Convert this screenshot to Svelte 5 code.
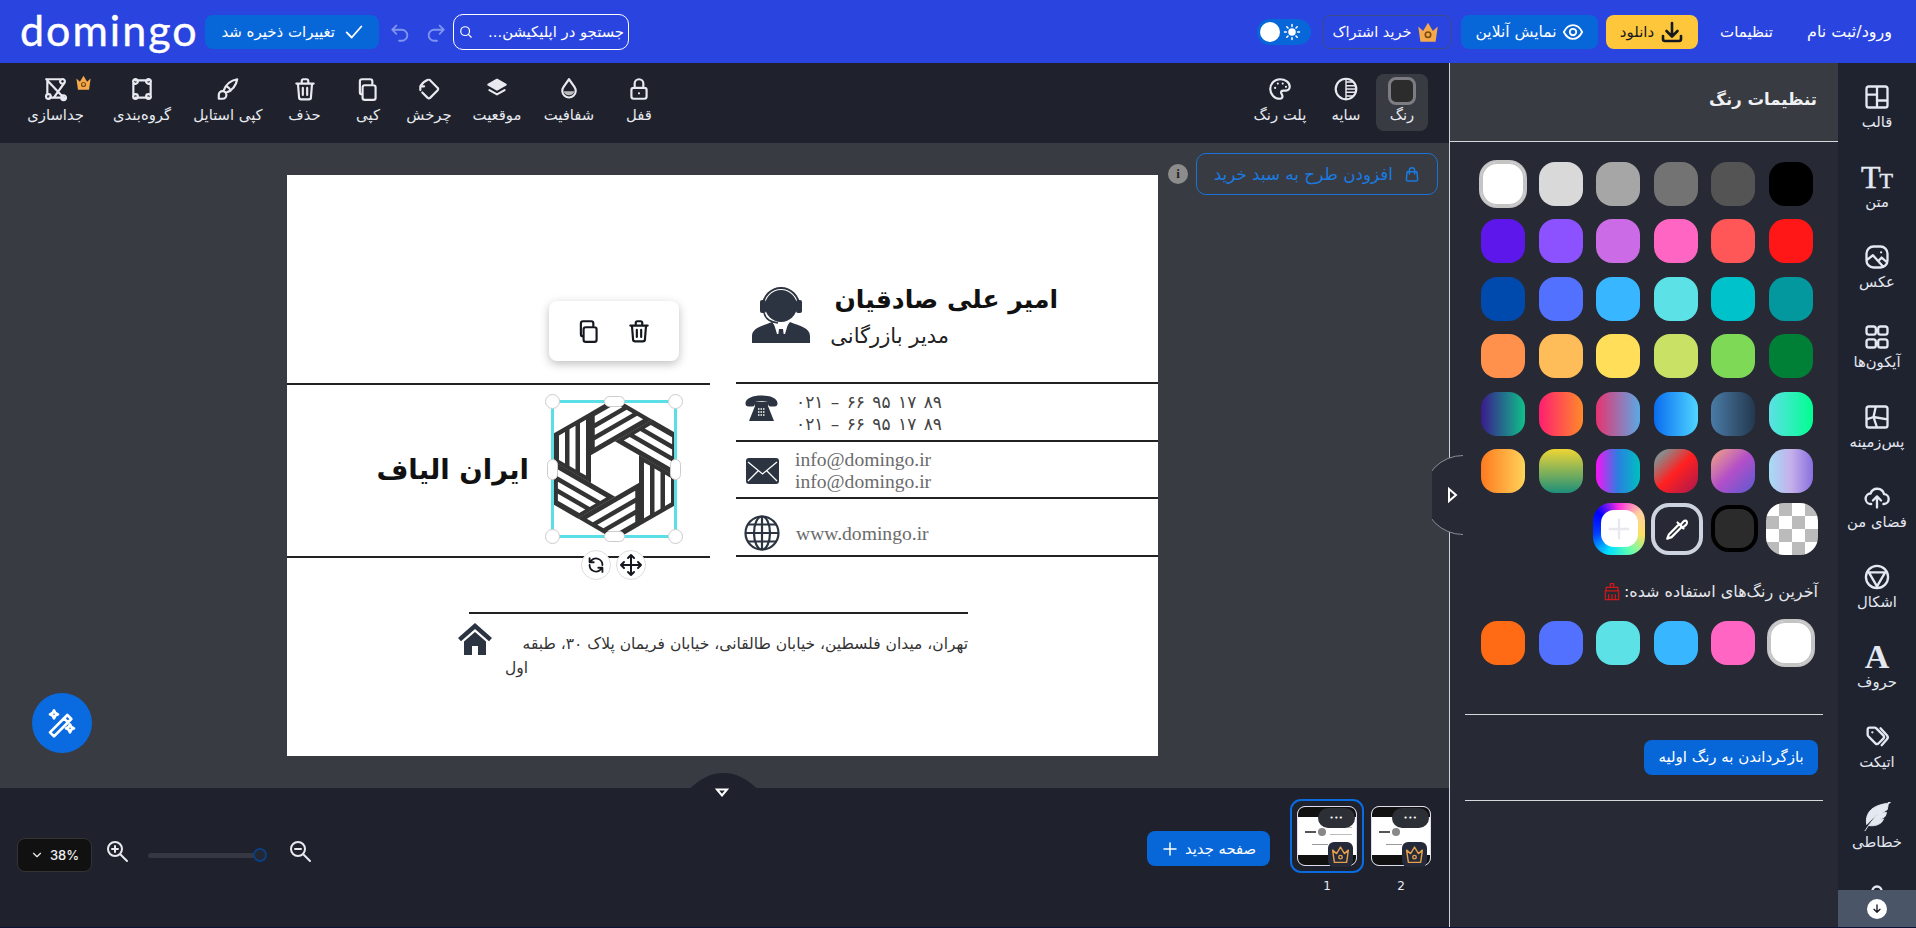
<script>
  const I = {
    lock: "M7 11h10a2 2 0 0 1 2 2v6a2 2 0 0 1-2 2H7a2 2 0 0 1-2-2v-6a2 2 0 0 1 2-2zM8 11V7a4 4 0 0 1 8 0v4M12 16v.01",
    rotate: "M12.5 3.5l7.5 7.5a1.5 1.5 0 0 1 0 2.2l-7 7a1.5 1.5 0 0 1-2.2 0l-5-5M4 13V9.5M4 9.5h3.5M4 9.5C6 6 8.5 4.5 11 3.5",
    copy: "M9 8.5h8a2 2 0 0 1 2 2V20a2 2 0 0 1-2 2H9a2 2 0 0 1-2-2v-9.5a2 2 0 0 1 2-2zM7 17H6.5a2 2 0 0 1-2-2V5a2 2 0 0 1 2-2h7.5a2 2 0 0 1 2 2v3.5",
    trash: "M4 7h16M9 7V4.5A1.5 1.5 0 0 1 10.500 3h3A1.500 1.500 0 0 1 15 4.500V7M5.500 7l1 12.500A2 2 0 0 0 8.500 21.500h7a2 2 0 0 0 2-2L18.500 7M10 11v6.500M14 11v6.500",
    brush: "M3.500 21v-3.500a3.500 3.500 0 1 1 3.500 3.500zM20.500 3c-6 1-10.500 5-12.500 10.500M20.500 3c-1 6-5 10.500-10.500 12.500M10.600 9.500c1.900.9 3.200 2.200 4 4",
    group: "M6 4h12M6 20h12M4 6v12M20 6v12M6 2.800a2.200 2.200 0 1 0 0 4.400a2.200 2.200 0 1 0 0-4.400zM18 2.800a2.200 2.200 0 1 0 0 4.400a2.200 2.200 0 1 0 0-4.400zM6 16.800a2.200 2.200 0 1 0 0 4.400a2.200 2.200 0 1 0 0-4.400zM18 16.800a2.200 2.200 0 1 0 0 4.400a2.200 2.200 0 1 0 0-4.400z",
    ungroup: "M3 3l17 18M3 3h13M6 20h12M4 4v13M20 6l-10 14M18 2.800a2.200 2.200 0 1 0 0 4.400a2.200 2.200 0 1 0 0-4.400zM5 16.800a2.200 2.200 0 1 0 0 4.400a2.200 2.200 0 1 0 0-4.400zM19 17.800a2.200 2.200 0 1 0 0 4.400a2.200 2.200 0 1 0 0-4.400z",
    palette: "M12 3a9 9 0 0 0 0 18c1.500 0 2.300-1 2.300-2.200 0-1.800-1.300-2.300-1.300-3.500 0-1.100.9-1.800 2-1.800h2.500A3.500 3.500 0 0 0 21 10c0-4-4-7-9-7zM7.500 11v.01M10 7v.01M14.500 7v.01M17.500 10v.01",
    layout: "M5 3h14a2 2 0 0 1 2 2v14a2 2 0 0 1-2 2H5a2 2 0 0 1-2-2V5a2 2 0 0 1 2-2zM12 3v18M3 10h9M12 15h9",
    photo: "M9 3h6a6 6 0 0 1 6 6v6a6 6 0 0 1-6 6H9a6 6 0 0 1-6-6V9a6 6 0 0 1 6-6zM3.500 14.500l5-4 8.500 9.500M13.500 15l2.500-2.500 4.500 4M15.500 8v.01",
    icons: "M5 3h4a2 2 0 0 1 2 2v3a2 2 0 0 1-2 2H5a2 2 0 0 1-2-2V5a2 2 0 0 1 2-2zM15 3h4a2 2 0 0 1 2 2v3a2 2 0 0 1-2 2h-4a2 2 0 0 1-2-2V5a2 2 0 0 1 2-2zM5 14h4a2 2 0 0 1 2 2v3a2 2 0 0 1-2 2H5a2 2 0 0 1-2-2v-3a2 2 0 0 1 2-2zM15 14h4a2 2 0 0 1 2 2v3a2 2 0 0 1-2 2h-4a2 2 0 0 1-2-2v-3a2 2 0 0 1 2-2z",
    bg: "M5 3h14a2 2 0 0 1 2 2v14a2 2 0 0 1-2 2H5a2 2 0 0 1-2-2V5a2 2 0 0 1 2-2zM11 3L9 12l3 9M3 14l6-2M9 12l12 2",
    cloud: "M7 18a4.500 4.500 0 0 1-.5-9A6 6 0 0 1 18 9.500a4.200 4.200 0 0 1-.5 8.500M12 21v-9M8.500 15l3.500-3.500 3.500 3.500",
    shapes: "M12 2.500a9.500 9.500 0 1 0 0 19a9.500 9.500 0 1 0 0-19zM5 8h14l-7 12z",
    tags: "M4 5.500A1.500 1.500 0 0 1 5.500 4H10c.5 0 1 .2 1.400.6l6 6a2 2 0 0 1 0 2.800l-4 4a2 2 0 0 1-2.800 0l-6-6A2 2 0 0 1 4 10zM8 8v.01M15 4.500l5.500 6a2.500 2.500 0 0 1 0 3.400L16 19",
    check: "M4 12.500l5.500 5.500L20 6",
    undo: "M8 14L3.500 9.500 8 5M4 9.500h10a6 6 0 0 1 0 12h-3",
    redo: "M16 14l4.500-4.500L16 5M20 9.500H10a6 6 0 0 0 0 12h3",
    search: "M10.500 3a7.500 7.500 0 1 0 0 15a7.500 7.500 0 1 0 0-15zM16 16l5 5",
    eye: "M2 12c2.500-5 6-7.500 10-7.500s7.500 2.500 10 7.500c-2.500 5-6 7.500-10 7.500S4.500 17 2 12zM12 8.500a3.500 3.500 0 1 0 0 7a3.500 3.500 0 1 0 0-7z",
    download: "M12 3v13M6.500 11l5.500 5.500 5.500-5.500M3 16v3a2 2 0 0 0 2 2h14a2 2 0 0 0 2-2v-3",
    bag: "M5.500 9h13l1 10a2 2 0 0 1-2 2.200H6.500a2 2 0 0 1-2-2.200zM8.500 12V7a3.500 3.500 0 0 1 7 0v5",
    dropper: "M3 21l1.500-4L14 7.500l2.500 2.500L7 19.500zM12.500 6l5.500 5.500M15 8.500l3-3.500c1-1 2.500-1 3 0s.500 2-.5 3l-3.500 3z",
    broom: "M10 2h4v4.500h-4zM5 6.500h14v4H5zM4 10.500h16V21H4zM8 15v6M12 15v6M16 15v6",
    plus: "M12 4v16M4 12h16",
    zoomin: "M10 3a7 7 0 1 0 0 14a7 7 0 1 0 0-14zM15.500 15.500L22 22M7 10h6M10 7v6",
    zoomout: "M10 3a7 7 0 1 0 0 14a7 7 0 1 0 0-14zM15.500 15.500L22 22M7 10h6",
    wand: "M3 19L16 6l3 3L6 22zM13.500 8.500l3 3M6 2.500l1 2 2 1-2 1-1 2-1-2-2-1 2-1zM18 13l1 2 2 1-2 1-1 2-1-2-2-1 2-1z",
    chev: "M6 9l6 6 6-6",
    cycle: "M19 12a7 7 0 0 0-12-5l-2 2M5 4.500V9h4.500M5 12a7 7 0 0 0 12 5l2-2M19 19.500V15h-4.500",
    move: "M12 2v20M2 12h20M12 2L9 5M12 2l3 3M12 22l-3-3M12 22l3-3M2 12l3-3M2 12l3 3M22 12l-3-3M22 12l-3 3",
    down: "M12 6v11M7.500 12.500L12 17l4.500-4.500"
  };
  const crown = "M3 7l4.500 4L12 3.500 16.500 11 21 7l-2 14H5z";

  const tools = [
    { l: "جداسازی", i: "ungroup", crown: true }, { l: "گروه‌بندی", i: "group" }, { l: "کپی استایل", i: "brush" },
    { l: "حذف", i: "trash" }, { l: "کپی", i: "copy" }, { l: "چرخش", i: "rotate" },
    { l: "موقعیت", i: "layers" }, { l: "شفافیت", i: "opacity" }, { l: "قفل", i: "lock" }
  ];
  const swatches = [
    "#ffffff", "#d9d9d9", "#a6a6a6", "#737373", "#545454", "#000000",
    "#5e17eb", "#8c52ff", "#cb6ce6", "#ff66c4", "#ff5757", "#ff1616",
    "#004aad", "#5271ff", "#38b6ff", "#5ce1e6", "#00c2cb", "#03989e",
    "#ff914d", "#ffbd59", "#ffde59", "#c9e265", "#7ed957", "#008037",
    "linear-gradient(90deg,#3a1a8c,#0fc08a)", "linear-gradient(90deg,#ff1f70,#ff8a2a)", "linear-gradient(90deg,#e8336f,#5aa9e6)",
    "linear-gradient(90deg,#0a6cf0,#4fd6ff)", "linear-gradient(90deg,#4a7ba6,#24384f)", "linear-gradient(90deg,#5de0e6,#00ff8f)",
    "linear-gradient(90deg,#ff7a1f,#ffd35a)", "linear-gradient(180deg,#eed535,#1d8f7a)", "linear-gradient(90deg,#f912f5,#2a7fe0,#00c0c0)",
    "linear-gradient(135deg,#8a8a8a 15%,#ff2020 50%,#a81850)", "linear-gradient(135deg,#f3a683,#b24fc9,#5a5ad0)", "linear-gradient(90deg,#a6dcf5,#c5b0ea,#8a70e0)"
  ];
  const recent = ["#ff6b14", "#5271ff", "#5ce1e6", "#38b6ff", "#ff66c4", "#ffffff"];
  const nav = [
    { l: "قالب", i: "layout" }, { l: "متن", t: "tt" }, { l: "عکس", i: "photo" }, { l: "آیکون‌ها", i: "icons" },
    { l: "پس‌زمینه", i: "bg" }, { l: "فضای من", i: "cloud" }, { l: "اشکال", i: "shapes" }, { l: "حروف", t: "a" },
    { l: "اتیکت", i: "tags" }, { l: "خطاطی", t: "f" }, { l: "", i: "lock" }
  ];
  const blades = [0, 60, 120, 180, 240, 300];
  const t = 0.5774;
  const stripe = (a, b) => {
    const m = 4.5;
    const top = (x) => -14 + (x - 24) * t + m;
    const bot = (x) => 56.6 - (x - 24) * t - m;
    return `${a},${top(a)} ${b},${top(b)} ${b},${bot(b)} ${a},${bot(a)}`;
  };
  const stripes = [stripe(29, 35), stripe(39.5, 45.5), stripe(50, 56)];
</script>

{#snippet ic(d, cls = "")}
  <svg viewBox="0 0 24 24" class="ic {cls}" aria-hidden="true"><path {d} /></svg>
{/snippet}

{#snippet crownIcon(cls = "")}
  <svg viewBox="0 0 24 24" class="crown {cls}" aria-hidden="true">
    <path d={crown} fill="#f6a94b" />
    <circle cx="12" cy="14.500" r="2.500" fill="none" stroke="#7a4a10" stroke-width="1.500" />
  </svg>
{/snippet}

{#snippet thumb(n, active)}
  <div class="thumb-col">
    <div class="thumb-frame" class:active>
      <div class="thumb">
        <div class="t-black"></div>
        <div class="t-mid">
          <span class="t-name"></span><span class="t-gear"></span>
          {#if n === 1}<span class="t-lines"><i></i><i></i><i></i></span>{/if}
          <span class="t-addr"></span>
        </div>
        <div class="t-black"></div>
      </div>
      <span class="dots">•••</span>
      <span class="t-crown">
        <svg viewBox="0 0 24 24" class="ic crown-line" aria-hidden="true"><path d={crown} /><circle cx="12" cy="15" r="2" /></svg>
      </span>
    </div>
    <span class="thumb-no">{n}</span>
  </div>
{/snippet}

<div class="app">
  <header class="topbar">
    <span class="logo">domingo</span>
    <div class="btn blue save" dir="rtl">{@render ic(I.check, "i22")}<span>تغییرات ذخیره شد</span></div>
    <span class="hist first">{@render ic(I.undo, "i22")}</span>
    <span class="hist">{@render ic(I.redo, "i22")}</span>
    <div class="search" dir="rtl"><span>جستجو در اپلیکیشن...</span>{@render ic(I.search, "i14")}</div>

    <div class="top-right">
      <div class="toggle">
        <span class="knob"></span>
        <svg viewBox="0 0 24 24" class="ic i18" aria-hidden="true">
          <circle cx="12" cy="12" r="5" fill="#fff" stroke="none" />
          <path d="M12 2v2.500M12 19.500V22M2 12h2.500M19.500 12H22M5 5l1.700 1.700M17.300 17.300L19 19M5 19l1.700-1.700M17.300 6.700L19 5" />
        </svg>
      </div>
      <div class="btn sub" dir="rtl">{@render crownIcon("c24")}<span>خرید اشتراک</span></div>
      <div class="btn blue online" dir="rtl">{@render ic(I.eye, "i22")}<span>نمایش آنلاین</span></div>
      <div class="btn dl" dir="rtl">{@render ic(I.download, "i24 bold")}<span>دانلود</span></div>
      <span class="link settings">تنظیمات</span>
      <span class="link login">ورود/ثبت نام</span>
    </div>
  </header>

  <div class="body">
    <div class="work">
      <div class="toolbar">
        <div class="tools">
          {#each tools as b}
            <div class="tool">
              {#if b.i === "layers"}
                <svg viewBox="0 0 24 24" class="ic i26" aria-hidden="true"><path d="M12 3.500l8 4.500-8 4.500L4 8z" fill="currentColor" /><path d="M5 13l7 4 7-4" /></svg>
              {:else if b.i === "opacity"}
                <svg viewBox="0 0 24 24" class="ic i26" aria-hidden="true"><path d="M7 14h10a5.200 5.200 0 0 1-10 0z" fill="#bbb" stroke="none" /><path d="M12 3l5 7a6.200 6.200 0 1 1-10 0z" /></svg>
              {:else}
                {@render ic(I[b.i], "i26")}
              {/if}
              {#if b.crown}{@render crownIcon("tool-crown")}{/if}
              <span>{b.l}</span>
            </div>
          {/each}
        </div>
        <div class="tools-r">
          <div class="tool r w70">{@render ic(I.palette, "i26")}<span>پلت رنگ</span></div>
          <div class="tool r w60">
            <svg viewBox="0 0 24 24" class="ic i26" aria-hidden="true"><circle cx="12" cy="12" r="9.500" /><path d="M12 2.500v19M13 5.500h5M13 9h7.500M13 12h8M13 15h7.500M13 18.500h5" stroke-width="1.300" /></svg>
            <span>سایه</span>
          </div>
          <div class="tool r active"><span class="color-box"></span><span>رنگ</span></div>
        </div>
      </div>

      <main class="canvas">
        <div class="page">
          <div class="rule" style="left:449px;top:207px;width:422px"></div>
          <div class="rule" style="left:449px;top:265px;width:422px"></div>
          <div class="rule" style="left:449px;top:322px;width:422px"></div>
          <div class="rule" style="left:449px;top:380px;width:422px"></div>
          <div class="rule" style="left:0;top:208px;width:423px"></div>
          <div class="rule" style="left:0;top:381px;width:423px"></div>
          <div class="rule" style="left:182px;top:437px;width:499px"></div>

          <span class="name" dir="rtl">امیر علی صادقیان</span>
          <span class="role" dir="rtl">مدیر بازرگانی</span>
          <svg class="avatar" viewBox="0 0 58 61" aria-hidden="true">
            <circle cx="29" cy="24" r="16" fill="#2b3440" />
            <path d="M11 24a18 18 0 0 1 36 0" fill="none" stroke="#2b3440" stroke-width="2" />
            <rect x="8" y="18" width="6" height="13" rx="2" fill="#2b3440" />
            <rect x="44" y="18" width="6" height="13" rx="2" fill="#2b3440" />
            <path d="M12 31c2 7 7 9 14 10" fill="none" stroke="#2b3440" stroke-width="1.500" />
            <path d="M0 61v-7c0-8 10-10 20-14l9 12 9-12c10 4 20 6 20 14v7z" fill="#2b3440" />
            <path d="M22 42l7 6 7-6-3 10h-8z" fill="#fff" />
            <path d="M27 47h4l1 8h-6z" fill="#2b3440" />
          </svg>

          <span class="digits l1" dir="ltr">۰۲۱ – ۶۶ ۹۵ ۱۷ ۸۹</span>
          <span class="digits l2" dir="ltr">۰۲۱ – ۶۶ ۹۵ ۱۷ ۸۹</span>
          <svg class="c-phone" viewBox="0 0 33 26" aria-hidden="true">
            <path d="M0.500 8C1 3 8 .5 16.500.5S32 3 32.500 8c.2 2-1 3.500-3 3.500h-4c-1.500 0-2.500-1-2.500-3V7c-4-1-9-1-13 0v1.500c0 2-1 3-2.500 3h-4C1.500 11.500.3 10 .5 8z" fill="#2b3440" />
            <path d="M10 7h13v4l6 15H4l6-15z" fill="#2b3440" />
            <path d="M13 14h7M13 17h7M13 20h7" stroke="#fff" stroke-width="1.500" stroke-dasharray="1.500 1" />
          </svg>

          <span class="mail m1">info@domingo.ir</span>
          <span class="mail m2">info@domingo.ir</span>
          <svg class="c-mail" viewBox="0 0 33 26" aria-hidden="true">
            <rect width="33" height="26" rx="3" fill="#2b3440" />
            <path d="M2 4l14.500 12L31 4M2 23l10.500-10.500M31 23L20.500 12.500" fill="none" stroke="#fff" stroke-width="1.300" />
          </svg>

          <span class="mail m3">www.domingo.ir</span>
          <svg class="c-globe" viewBox="0 0 36 36" aria-hidden="true">
            <g fill="none" stroke="#2b3440" stroke-width="2.200">
              <circle cx="18" cy="18" r="16.500" /><ellipse cx="18" cy="18" rx="8" ry="16.500" />
              <path d="M18 1.500v33M1.500 18h33M4 9.500h28M4 26.500h28" />
            </g>
          </svg>

          <p class="addr" dir="rtl">تهران، میدان فلسطین، خیابان طالقانی، خیابان فریمان پلاک ۳۰، طبقه</p>
          <span class="addr2" dir="rtl">اول</span>
          <svg class="c-home" viewBox="0 0 34 32" aria-hidden="true">
            <path d="M17 0L0 15l3 3.200L17 6l14 12.200L34 15z" fill="#2b3440" />
            <path d="M6 18.500V32h8v-9h6v9h8V18.500L17 9z" fill="#2b3440" />
          </svg>

          <span class="company" dir="rtl">ایران الیاف</span>

          <svg class="hex" viewBox="-64 -72 128 144" aria-hidden="true">
            {#each blades as a}
              <g transform="rotate({a})">
                <polygon points="24,-14 61.500,7.600 61.500,35.500 24,57" fill="#333" />
                {#each stripes as s}<polygon points={s} fill="#fff" />{/each}
              </g>
            {/each}
          </svg>

          <div class="sel">
            <i class="h c tl"></i><i class="h c tr"></i><i class="h c bl"></i><i class="h c br"></i>
            <i class="h px top"></i><i class="h px bottom"></i><i class="h py left"></i><i class="h py right"></i>
          </div>
          <span class="round r1">{@render ic(I.cycle, "i22 dark")}</span>
          <span class="round r2">{@render ic(I.move, "i24 dark")}</span>
          <div class="pop">
            {@render ic(I.copy, "i26 dark")}
            {@render ic(I.trash, "i26 dark")}
          </div>
        </div>

        <div class="info">i</div>
        <div class="buy" dir="rtl">{@render ic(I.bag, "i18")}<span>افزودن طرح به سبد خرید</span></div>
        <div class="magic">{@render ic(I.wand, "i32")}</div>
        <div class="tab-down">
          <svg viewBox="0 0 66 15" class="tab-shape" aria-hidden="true"><path d="M0 15C10 6 20 0 33 0s23 6 33 15z" fill="#1f222c" /></svg>
        </div>
      </main>

      <footer class="footbar">
        <svg class="tri" viewBox="0 0 14 9" aria-hidden="true"><path d="M2 1.500h10L7 7.500z" fill="none" stroke="#fff" stroke-width="2" /></svg>
        <div class="zoombox">{@render ic(I.chev, "i14")}<span>38%</span></div>
        <span class="zi">{@render ic(I.zoomin, "i24")}</span>
        <div class="slider"><span class="knob2"></span></div>
        <span class="zo">{@render ic(I.zoomout, "i24")}</span>
        <div class="btn blue newpage" dir="rtl"><span>صفحه جدید</span>{@render ic(I.plus, "i18")}</div>
        <div class="thumbs">
          {@render thumb(1, true)}
          {@render thumb(2, false)}
        </div>
      </footer>
    </div>

    <aside class="panel">
      <svg class="handle" viewBox="0 0 40 80" aria-hidden="true">
        <path d="M31 0.500A39.500 39.500 0 0 0 31 79.500H40V.5z" fill="#272a35" />
        <path d="M31 0.500A39.500 39.500 0 0 0 31 79.500" fill="none" stroke="#8a8d96" stroke-width="1" />
        <path d="M17 34l7 6-7 6z" fill="#272a35" stroke="#fff" stroke-width="2" />
      </svg>
      <div class="p-head"><h2 dir="rtl">تنظیمات رنگ</h2></div>
      <div class="grid">
        {#each swatches as s}
          <span class="sw" class:white={s === "#ffffff"} style="background:{s}"></span>
        {/each}
      </div>
      <div class="specials">
        <span class="sp plus"><span class="plus-in">{@render ic(I.plus, "i28 faint")}</span></span>
        <span class="sp drop">{@render ic(I.dropper, "i26")}</span>
        <span class="sp blk"></span>
        <span class="sp chk"></span>
      </div>
      <div class="recent-l">
        {@render ic(I.broom, "i20 red")}
        <span dir="rtl">آخرین رنگ‌های استفاده شده:</span>
      </div>
      <div class="grid rec">
        {#each recent as s}
          <span class="sw" class:white={s === "#ffffff"} style="background:{s}"></span>
        {/each}
      </div>
      <hr class="one" />
      <div class="reset"><div class="btn blue" dir="rtl">بازگرداندن به رنگ اولیه</div></div>
      <hr class="two" />
    </aside>

    <nav class="nav">
      {#each nav as n}
        <div class="nav-i">
          <span class="nav-ico">
            {#if n.t === "tt"}<span class="tt"><b>T</b><b class="sm">T</b></span>
            {:else if n.t === "a"}<span class="aa">A</span>
            {:else if n.t === "f"}
              <svg viewBox="0 0 32 32" class="feather" aria-hidden="true">
                <path d="M30 1C20 2 12 5 8 10c-3 4-4 9-3 14L17 12 7 25c4 1 9 0 12-2 2-1 3-3 4-5l-5 1 6-3c1-1 2-3 2-5l-5 1 6-4c1-6 2-10 3-18zM7 25l-4 6" fill="#e4e8f0" stroke="#e4e8f0" stroke-width="1" />
              </svg>
            {:else}{@render ic(I[n.i], "i28")}{/if}
          </span>
          <span class="nav-l">{n.l}</span>
        </div>
      {/each}
      <div class="nav-down"><span class="nd">{@render ic(I.down, "i16 dark")}</span></div>
    </nav>
  </div>
</div>

<style>
  :global(body) { margin: 0; background: #0c1238; }
  .app { width: 1916px; height: 927px; overflow: hidden; font-family: "DejaVu Sans", "Noto Sans", sans-serif; color: #e8eaf0; display: flex; flex-direction: column; }

  .ic { fill: none; stroke: currentColor; stroke-width: 2; stroke-linecap: round; stroke-linejoin: round; flex: none; display: block; }
  .i14 { width: 14px; height: 14px; }
  .i16 { width: 16px; height: 16px; }
  .i18 { width: 18px; height: 18px; }
  .i20 { width: 20px; height: 20px; }
  .i22 { width: 22px; height: 22px; }
  .i24 { width: 24px; height: 24px; }
  .i26 { width: 26px; height: 26px; }
  .i28 { width: 28px; height: 28px; }
  .i32 { width: 32px; height: 32px; }
  .dark { color: #15181f; }
  .red { color: #d01818; stroke-width: 1.500; }
  .faint { color: #e8e8ee; }
  .bold { stroke-width: 2.600; }
  .crown { display: block; flex: none; }
  .c24 { width: 26px; height: 26px; }

  .topbar { height: 63px; background: #2a44e0; display: flex; align-items: center; flex: none; padding: 0 23px 0 20px; box-sizing: border-box; color: #fff; }
  .logo { font-family: "Lato", sans-serif; font-size: 43px; font-weight: 400; letter-spacing: 2px; line-height: 1; width: 175px; margin-top: -4px; -webkit-text-stroke: .4px #fff; }
  .btn { display: flex; align-items: center; border-radius: 8px; box-sizing: border-box; font-size: 15px; }
  .blue { background: #0766d8; color: #fff; }
  .save { width: 174px; height: 34px; margin-left: 10px; padding: 0 14px; gap: 8px; white-space: nowrap; }
  .hist { color: #7f95ef; }
  .hist.first { margin-left: 10px; }
  .hist + .hist { margin-left: 14px; }
  .search { margin-left: 6px; width: 176px; height: 36px; border: 1.500px solid #fff; border-radius: 10px; display: flex; align-items: center; justify-content: space-between; padding: 0 4px 0 5px; box-sizing: border-box; font-size: 14.800px; white-space: nowrap; }

  .top-right { margin-left: auto; display: flex; align-items: center; }
  .toggle { width: 54px; height: 26px; border-radius: 13px; background: #0766d8; display: flex; align-items: center; padding: 0 3px; box-sizing: border-box; gap: 3px; }
  .knob { width: 20px; height: 20px; border-radius: 50%; background: #fff; }
  .sub { width: 130px; height: 34px; margin-left: 11px; border: 1.500px solid #3d4a86; padding: 0 8px; gap: 4px; white-space: nowrap; justify-content: center; font-size: 14.500px; }
  .online { width: 137px; height: 34px; margin-left: 9px; padding: 0 8px; gap: 5px; justify-content: center; white-space: nowrap; font-size: 15.500px; }
  .dl { width: 92px; height: 34px; margin-left: 8px; background: #fdc63b; color: #15181f; padding: 0 8px; gap: 6px; justify-content: center; }
  .link { font-size: 15px; white-space: nowrap; text-align: center; }
  .settings { margin-left: 22px; width: 53px; }
  .login { margin-left: 33px; width: 87px; font-size: 16px; }

  .body { flex: 1; display: flex; min-height: 0; }
  .work { width: 1449px; display: flex; flex-direction: column; flex: none; }

  .toolbar { height: 80px; background: #1f222c; display: flex; flex: none; }
  .tools { display: grid; grid-template-columns: 85px 88px 84px 69px 58px 64px 72px 72px 68px; padding-left: 13px; }
  .tool { position: relative; display: flex; flex-direction: column; align-items: center; font-size: 14.800px; line-height: 18px; white-space: nowrap; padding-top: 13px; gap: 4px; box-sizing: border-box; }
  .tool-crown { position: absolute; width: 19px; height: 19px; left: 61px; top: 10px; }
  .tools-r { margin-left: auto; display: flex; padding-right: 21px; }
  .tool.r { width: 52px; padding-top: 13px; }
  .w70 { width: 72px !important; }
  .w60 { width: 60px !important; }
  .tool.active { background: #383b41; border-radius: 8px; height: 57px; margin-top: 11px; padding-top: 3px !important; gap: 1px; }
  .color-box { width: 22px; height: 22px; border-radius: 8px; background: #2c2c2c; border: 3px solid #7b7d82; box-sizing: content-box; display: block; }

  .canvas { flex: 1; background: #383b41; position: relative; }
  .page { position: absolute; left: 287px; top: 32px; width: 871px; height: 581px; background: #fff; color: #111; }
  .rule { position: absolute; height: 2px; background: #222; }

  .page > span, .page > svg, .page > p { position: absolute; margin: 0; }
  .name { right: 100px; top: 107px; font-size: 25px; font-weight: 700; white-space: nowrap; line-height: 36px; }
  .role { right: 209px; top: 149px; font-size: 21px; white-space: nowrap; line-height: 24px; color: #222; }
  .avatar { left: 465px; top: 107px; width: 58px; height: 61px; }
  .digits { left: 509px; font-size: 17px; letter-spacing: 4.800px; word-spacing: 2px; color: #444; white-space: nowrap; line-height: 20px; }
  .l1 { top: 217px; }
  .l2 { top: 239px; }
  .c-phone { left: 458px; top: 220px; width: 33px; height: 26px; }
  .mail { font-family: "Liberation Serif", serif; font-size: 19.600px; color: #6b6b6b; line-height: 24px; white-space: nowrap; }
  .m1 { left: 508px; top: 273px; }
  .m2 { left: 508px; top: 295px; }
  .m3 { left: 509px; top: 347px; }
  .c-mail { left: 459px; top: 283px; width: 33px; height: 26px; }
  .c-globe { left: 457px; top: 340px; width: 36px; height: 36px; }
  .addr { right: 190px; top: 456px; font-size: 15.500px; line-height: 26px; color: #333; white-space: nowrap; }
  .addr2 { left: 218px; top: 480px; font-size: 15.500px; line-height: 26px; color: #333; }
  .c-home { left: 171px; top: 448px; width: 34px; height: 32px; }
  .company { right: 629px; top: 270px; font-size: 27.500px; font-weight: 700; white-space: nowrap; line-height: 48px; color: #111; }
  .hex { left: 264px; top: 222px; width: 128px; height: 144px; }
  .sel { position: absolute; left: 264px; top: 225px; width: 126px; height: 138px; border: 3px solid #5adfe6; box-sizing: border-box; }
  .h { position: absolute; background: #fff; border: 1px solid #ccc; box-sizing: border-box; }
  .c { width: 15px; height: 15px; border-radius: 50%; }
  .tl { left: -9px; top: -9px; } .tr { right: -9px; top: -9px; } .bl { left: -9px; bottom: -9px; } .br { right: -9px; bottom: -9px; }
  .px { width: 21px; height: 11px; border-radius: 6px; left: 50%; margin-left: -10px; }
  .top { top: -7px; } .bottom { bottom: -7px; }
  .py { width: 11px; height: 21px; border-radius: 6px; top: 50%; margin-top: -10px; }
  .left { left: -7px; } .right { right: -7px; }
  .round { width: 30px; height: 30px; border-radius: 50%; background: #fff; border: 1px solid #ddd; display: flex; align-items: center; justify-content: center; box-sizing: border-box; top: 375px; }
  .r1 { left: 294px; }
  .r2 { left: 329px; }
  .pop { position: absolute; left: 262px; top: 126px; width: 130px; height: 60px; background: #fff; border-radius: 8px; box-shadow: 0 3px 10px rgba(0,0,0,.25); display: flex; align-items: center; justify-content: center; gap: 24px; }

  .info { position: absolute; left: 1168px; top: 21px; width: 20px; height: 20px; border-radius: 50%; background: #8c8c8c; color: #222; font: 700 13px/20px "Liberation Serif", serif; text-align: center; }
  .buy { position: absolute; left: 1196px; top: 10px; width: 242px; height: 42px; border: 1.500px solid #1a73d9; border-radius: 10px; box-sizing: border-box; display: flex; align-items: center; gap: 10px; padding: 0 16px; color: #1a7ae0; font-size: 16.800px; white-space: nowrap; }
  .magic { position: absolute; left: 32px; top: 550px; width: 60px; height: 60px; border-radius: 50%; background: #0a6be0; display: flex; align-items: center; justify-content: center; color: #fff; }
  .tab-down { position: absolute; left: 690px; bottom: 0; width: 67px; height: 15px; }
  .tab-shape { display: block; width: 67px; height: 15px; }

  .footbar { height: 139px; background: #1f222c; display: flex; align-items: center; padding: 0 11px 9px 17px; box-sizing: border-box; position: relative; flex: none; }
  .tri { position: absolute; left: 715px; top: 0; width: 14px; height: 9px; }
  .zoombox { width: 75px; height: 34px; background: #111; border: 1px solid #333; border-radius: 8px; box-sizing: border-box; display: flex; align-items: center; justify-content: center; gap: 6px; font: 500 13px "Inter", sans-serif; margin-top: 4px; color: #eee; }
  .zi { margin-left: 13px; margin-top: -4px; }
  .slider { margin-left: 19px; width: 112px; height: 5px; background: #353843; border-radius: 3px; position: relative; margin-top: 4px; }
  .knob2 { position: absolute; right: -7px; top: -5px; width: 14px; height: 14px; border-radius: 50%; background: #24272f; border: 2px solid #0a3f82; box-sizing: border-box; }
  .zo { margin-left: 28px; margin-top: -4px; }
  .newpage { margin-left: auto; width: 123px; height: 35px; justify-content: center; gap: 6px; font-size: 14.800px; margin-bottom: 9px; white-space: nowrap; }
  .thumbs { display: flex; margin-left: 20px; align-self: flex-start; margin-top: 11px; }
  .thumb-col { width: 74px; display: flex; flex-direction: column; align-items: center; }
  .thumb-frame { width: 74px; height: 74px; box-sizing: border-box; border: 2.500px solid transparent; border-radius: 11px; padding: 4.500px; position: relative; }
  .thumb-frame.active { border-color: #0a6be0; }
  .thumb { width: 60px; height: 60px; border: 1.500px solid #dde; border-radius: 8px; box-sizing: border-box; overflow: hidden; background: #fff; display: flex; flex-direction: column; }
  .t-black { height: 10px; background: #111; flex: none; }
  .t-mid { flex: 1; position: relative; }
  .t-name { position: absolute; left: 7px; top: 14px; width: 11px; height: 2px; background: #555; }
  .t-gear { position: absolute; left: 20px; top: 11px; width: 8px; height: 8px; border-radius: 50%; background: #888; }
  .t-lines { position: absolute; left: 32px; top: 3px; width: 22px; display: flex; flex-direction: column; gap: 6px; }
  .t-lines i { height: 1px; background: #bbb; }
  .t-addr { position: absolute; left: 14px; top: 27px; width: 16px; height: 1px; background: #999; }
  .dots { position: absolute; left: 26px; top: 7px; width: 37px; height: 20px; background: #2d2f36; border-radius: 10px; color: #fff; font: 7px/20px "DejaVu Sans", sans-serif; text-align: center; letter-spacing: .5px; }
  .t-crown { position: absolute; left: 36px; top: 41px; width: 25px; height: 25px; background: #252a3a; border-radius: 6px; display: flex; align-items: center; justify-content: center; }
  .crown-line { width: 21px; height: 21px; color: #e6a04a; stroke-width: 1.600; }
  .thumb-no { font-size: 12px; margin-top: 6px; }

  .panel { width: 389px; flex: none; background: #272a35; position: relative; border-left: 1px solid #cfd2d8; box-sizing: border-box; display: flex; flex-direction: column; }
  .handle { position: absolute; left: -18px; top: 392px; width: 40px; height: 80px; }
  .p-head { height: 79px; background: #383b41; border-bottom: 1px solid #d5d7db; display: flex; align-items: center; justify-content: flex-end; padding: 0 21px 6px 0; box-sizing: border-box; flex: none; }
  h2 { margin: 0; font-size: 16.500px; font-weight: 700; color: #f0f1f4; white-space: nowrap; }
  .grid { display: grid; grid-template-columns: repeat(6, 44px); gap: 13.400px 13.600px; margin: 20px 0 0 31px; }
  .grid.rec { margin-top: 17px; }
  .sw { width: 44px; height: 44px; border-radius: 16px; display: block; }
  .white { box-shadow: 0 0 0 2px #c4c4c4, inset 0 0 0 2px #c4c4c4; }
  .specials { display: flex; justify-content: flex-end; align-items: center; padding-right: 20px; margin-top: 10px; }
  .sp { display: flex; align-items: center; justify-content: center; border-radius: 18px; box-sizing: border-box; }
  .plus { width: 52px; height: 52px; background: conic-gradient(from 0deg, #ff30e0, #ffd0a0, #ffe060, #60ffb0, #00e0ff, #0040ff, #0000ff, #ff30e0); }
  .plus-in { width: 37px; height: 37px; border-radius: 13px; background: #fff; display: flex; align-items: center; justify-content: center; }
  .drop { width: 52px; height: 52px; margin-left: 6px; border: 4px solid #cdd3df; background: #272a35; color: #fff; }
  .blk { width: 47px; height: 47px; margin-left: 8px; border: 4px solid #000; background: #2b2b2b; }
  .chk { width: 52px; height: 52px; margin-left: 8px; background: repeating-conic-gradient(#bbb 0 25%, #fff 0 50%) 0 0/26px 26px; }
  .recent-l { display: flex; justify-content: flex-end; align-items: center; gap: 2px; padding-right: 20px; margin-top: 25px; height: 24px; font-size: 16px; white-space: nowrap; color: #e4e6ec; }
  hr { border: 0; height: 1px; background: #d5d7db; margin: 0 15px; flex: none; }
  .one { margin-top: 49px; }
  .reset { display: flex; justify-content: flex-end; padding-right: 20px; margin-top: 25px; }
  .reset .btn { width: 174px; height: 35px; justify-content: center; font-size: 15px; white-space: nowrap; }
  .two { margin-top: 25px; }

  .nav { flex: 1; background: #1f2330; position: relative; overflow: hidden; padding-top: 10px; box-sizing: border-box; }
  .nav-i { height: 80px; display: flex; flex-direction: column; align-items: center; box-sizing: border-box; }
  .nav-ico { height: 48px; display: flex; align-items: center; justify-content: center; color: #e4e8f0; flex: none; }
  .nav-l { font-size: 14.800px; line-height: 14px; white-space: nowrap; color: #e4e8f0; margin-top: -6px; }
  .tt { font-family: "Liberation Serif", serif; font-size: 32px; line-height: 1; display: flex; align-items: baseline; -webkit-text-stroke: .5px #e4e8f0; }
  .tt b { font-weight: 400; }
  .tt .sm { font-size: 22px; margin-left: -1px; }
  .aa { font: 700 34px/1 "Liberation Serif", serif; }
  .feather { width: 30px; height: 30px; display: block; }
  .nav-down { position: absolute; left: -1px; right: 0; bottom: 0; height: 37px; background: #4a5568; display: flex; align-items: center; justify-content: center; }
  .nd { width: 20px; height: 20px; border-radius: 50%; background: #fff; display: flex; align-items: center; justify-content: center; }
</style>
